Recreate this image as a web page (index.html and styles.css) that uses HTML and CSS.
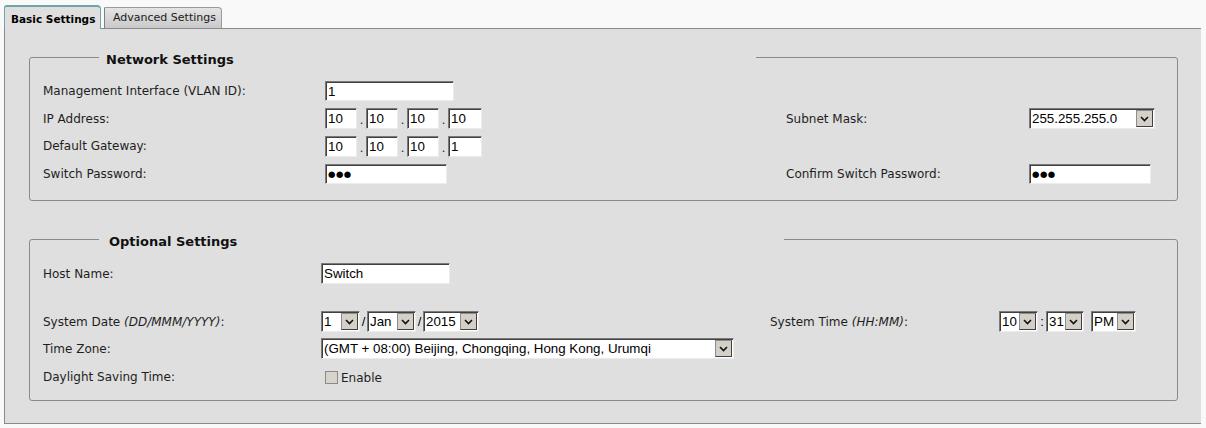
FILE: index.html
```html
<!DOCTYPE html>
<html>
<head>
<meta charset="utf-8">
<title>Basic Settings</title>
<link rel="stylesheet" href="styles.css">
</head>
<body>
<div class="tabs">
  <div class="tab active">Basic Settings</div>
  <div class="tab">Advanced Settings</div>
</div>
<div class="panel">
  <fieldset class="fs fs-net">
    <legend class="lg lg-net">Network Settings</legend>
    <div class="grid grid-net">
      <div class="lbl">Management Interface (VLAN ID):</div>
      <div class="val wide"><span class="inp w129">1</span></div>

      <div class="lbl">IP Address:</div>
      <div class="val ip">
        <span class="inp oct">10</span><span class="dot">.</span><span class="inp oct">10</span><span class="dot">.</span><span class="inp oct">10</span><span class="dot">.</span><span class="inp oct last">10</span>
      </div>
      <div class="lbl">Subnet Mask:</div>
      <div class="val"><span class="sel w126"><span class="txt">255.255.255.0</span><span class="btn"><svg viewBox="0 0 9 6" width="9" height="6"><polyline points="1,1 4.5,4.5 8,1"/></svg></span></span></div>

      <div class="lbl">Default Gateway:</div>
      <div class="val ip wide">
        <span class="inp oct">10</span><span class="dot">.</span><span class="inp oct">10</span><span class="dot">.</span><span class="inp oct">10</span><span class="dot">.</span><span class="inp oct last">1</span>
      </div>

      <div class="lbl">Switch Password:</div>
      <div class="val"><span class="inp w122 pw">●●●</span></div>
      <div class="lbl">Confirm Switch Password:</div>
      <div class="val"><span class="inp w122 pw">●●●</span></div>
    </div>
  </fieldset>

  <fieldset class="fs fs-opt">
    <legend class="lg lg-opt">Optional Settings</legend>
    <div class="grid grid-opt">
      <div class="lbl">Host Name:</div>
      <div class="val wide"><span class="inp w129 h21">Switch</span></div>

      <div class="spacer"></div>

      <div class="lbl">System Date <i>(DD/MMM/YYYY)</i>:</div>
      <div class="val row">
        <span class="sel w39"><span class="txt">1</span><span class="btn"><svg viewBox="0 0 9 6" width="9" height="6"><polyline points="1,1 4.5,4.5 8,1"/></svg></span></span><span class="sep">/</span><span class="sel w49"><span class="txt">Jan</span><span class="btn"><svg viewBox="0 0 9 6" width="9" height="6"><polyline points="1,1 4.5,4.5 8,1"/></svg></span></span><span class="sep">/</span><span class="sel w56"><span class="txt">2015</span><span class="btn"><svg viewBox="0 0 9 6" width="9" height="6"><polyline points="1,1 4.5,4.5 8,1"/></svg></span></span>
      </div>
      <div class="lbl">System Time <i>(HH:MM)</i>:</div>
      <div class="val row">
        <span class="sel w39"><span class="txt">10</span><span class="btn"><svg viewBox="0 0 9 6" width="9" height="6"><polyline points="1,1 4.5,4.5 8,1"/></svg></span></span><span class="sep colon">:</span><span class="sel w38"><span class="txt">31</span><span class="btn"><svg viewBox="0 0 9 6" width="9" height="6"><polyline points="1,1 4.5,4.5 8,1"/></svg></span></span><span class="gap"></span><span class="sel w45"><span class="txt">PM</span><span class="btn"><svg viewBox="0 0 9 6" width="9" height="6"><polyline points="1,1 4.5,4.5 8,1"/></svg></span></span>
      </div>

      <div class="lbl">Time Zone:</div>
      <div class="val wide"><span class="sel w413"><span class="txt">(GMT + 08:00) Beijing, Chongqing, Hong Kong, Urumqi</span><span class="btn"><svg viewBox="0 0 9 6" width="9" height="6"><polyline points="1,1 4.5,4.5 8,1"/></svg></span></span></div>

      <div class="lbl">Daylight Saving Time:</div>
      <div class="val wide chk-row"><span class="chk"></span><span class="chk-lbl">Enable</span></div>
    </div>
  </fieldset>
</div>
</body>
</html>
```
FILE: styles.css
```css
html, body {
  margin: 0;
  padding: 0;
  background: #f9f9f9;
}
body {
  font-family: "DejaVu Sans", Verdana, sans-serif;
  font-size: 12px;
  color: #1e1e1e;
  width: 1206px;
  height: 428px;
  overflow: hidden;
}

/* ---------- tabs ---------- */
.tabs {
  display: flex;
  align-items: flex-end;
  height: 28px;
  padding-left: 4px;
}
.tab {
  box-sizing: border-box;
  height: 21px;
  width: 118px;
  margin-left: 3px;
  padding-left: 8px;
  font-size: 11px;
  line-height: 20px;
  color: #1a1a1a;
  background: linear-gradient(#e4e4e4, #c9c9c9);
  border: 1px solid #9a9a9a;
  border-left-color: #808080;
  border-bottom: none;
  border-top-right-radius: 4px;
  border-top-left-radius: 1px;
}
.tab.active {
  position: relative;
  z-index: 1;
  margin-left: 0;
  width: 97px;
  height: 24px;
  margin-bottom: -1px;
  padding-left: 6px;
  font-size: 10.5px;
  font-weight: bold;
  line-height: 24px;
  color: #000;
  background: #dfdfdf;
  border: 1px solid #6ea5a8;
  border-top: 2px solid #6ea5a8;
  border-bottom: none;
  border-top-left-radius: 3px;
  border-top-right-radius: 4px;
}

/* ---------- panel ---------- */
.panel {
  box-sizing: border-box;
  width: 1197px;
  margin-left: 4px;
  height: 396px;
  background: #dfdfdf;
  border-top: 1px solid #8a8a8c;
  border-left: 1px solid #8a8a8c;
  border-bottom: 1px solid #8a8a8c;
  overflow: hidden;
}

/* ---------- fieldsets ---------- */
.fs {
  margin: 17px 23px 0 24px;
  padding: 9px 14px 13px 13px;
  border: 1px solid #8a8a8c;
  border-radius: 3px;
  min-width: 0;
}
.fs-opt {
  margin-top: 27px;
  padding-bottom: 8px;
}
.lg {
  box-sizing: border-box;
  margin-left: 56px;
  padding: 6px 0 0 7px;
  font-size: 13px;
  line-height: 16px;
  font-weight: bold;
  color: #111;
}
.lg-net { width: 657px; }
.lg-opt { width: 685px; padding-left: 10px; }

/* ---------- grids ---------- */
.grid {
  display: grid;
  align-items: center;
}
.grid-net {
  grid-template-columns: 282px 461px 243px 1fr;
  grid-template-rows: 28px 27px 28px 27px;
}
.grid-opt {
  grid-template-columns: 278px 449px 229px 1fr;
  grid-template-rows: 29px 20px 27px 27px 30px;
}
.wide { grid-column: 2 / 5; }
.spacer { grid-column: 1 / 5; }
.lbl { white-space: nowrap; }
.lbl i { font-style: italic; }
.val { display: flex; align-items: center; }

/* ---------- controls ---------- */
.inp, .sel {
  box-sizing: border-box;
  background: #fff;
  border: 1px solid;
  border-color: #7a7a7a #ececec #ececec #7a7a7a;
  box-shadow: inset 1px 1px 0 #404040;
  font-family: "Liberation Sans", Arial, sans-serif;
  font-size: 13.33px;
  color: #000;
}
.inp {
  display: inline-block;
  height: 20px;
  line-height: 19px;
  padding-left: 2px;
  white-space: nowrap;
}
.h21 { height: 21px; line-height: 20px; }
.w129 { width: 129px; }
.w122 { width: 122px; }
.oct { width: 32px; height: 21px; line-height: 20px; }
.oct.last { width: 34px; }
.dot {
  width: 9px;
  text-align: center;
  font-family: "Liberation Sans", Arial, sans-serif;
  font-size: 13px;
  line-height: 21px;
  padding-top: 2px;
}
.pw {
  font-family: "DejaVu Sans", sans-serif;
  font-size: 8.5px;
  letter-spacing: 0.5px;
  line-height: 19px;
  padding-left: 2px;
}

.sel {
  display: inline-flex;
  align-items: stretch;
  height: 21px;
  padding: 1px;
}
.sel .txt {
  flex: 1;
  padding-left: 1px;
  line-height: 18px;
  white-space: nowrap;
  overflow: hidden;
}
.sel .btn {
  box-sizing: border-box;
  width: 17px;
  background: #d4d0c8;
  border: 1px solid;
  border-color: #8c8c8c #404040 #404040 #8c8c8c;
  display: flex;
  align-items: center;
  justify-content: center;
}
.sel .btn svg polyline {
  fill: none;
  stroke: #111;
  stroke-width: 1.6;
}
.w126 { width: 126px; }
.w38 { width: 38px; }
.w39 { width: 39px; }
.w45 { width: 45px; }
.w49 { width: 49px; }
.w56 { width: 56px; }
.w413 { width: 413px; }

.row .sep {
  width: 7px;
  text-align: center;
  font-family: "Liberation Sans", Arial, sans-serif;
  font-size: 13px;
  color: #000;
}
.row .colon { width: 8px; }
.row .gap { width: 7px; }

.chk-row { padding-left: 4px; }
.chk {
  box-sizing: border-box;
  width: 13px;
  height: 13px;
  background: #d8d4cc;
  border: 1px solid #8a8a8a;
  margin-top: 1px;
}
.chk-lbl {
  margin-left: 3px;
  padding-top: 2px;
}
```
